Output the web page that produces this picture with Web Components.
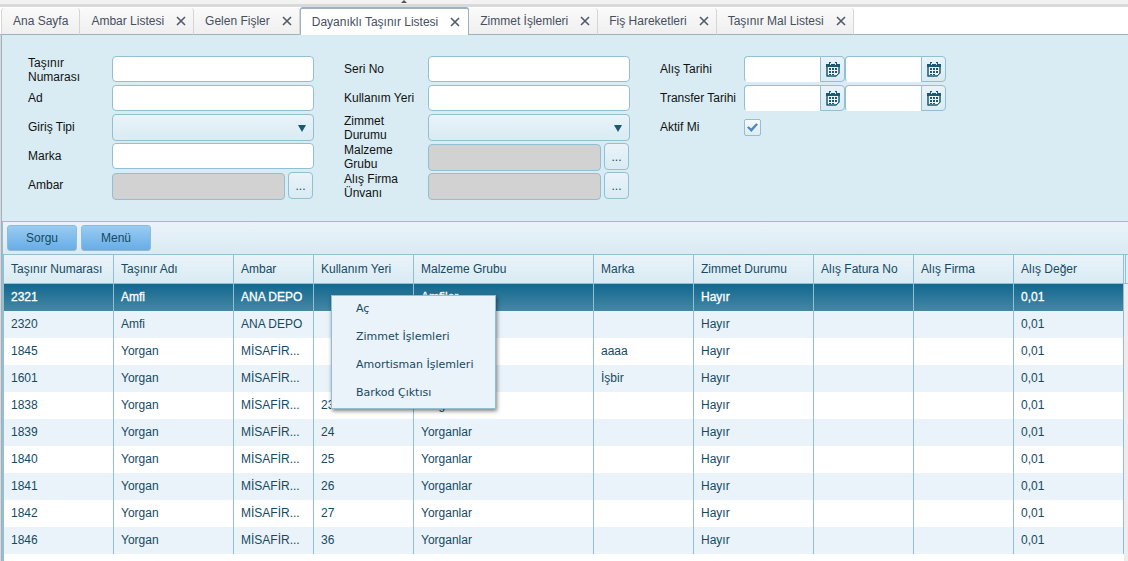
<!DOCTYPE html>
<html lang="tr">
<head>
<meta charset="utf-8">
<title>Dayanıklı Taşınır Listesi</title>
<style>
html, body { margin: 0; height: 100%; }
body { font: 12px/14px "Liberation Sans", Arial, sans-serif; color: #111; background: #fff; overflow: hidden; }
</style>
</head>
<body>
<asset-app></asset-app>

<script>
const define = (name, html, setup) => {
  const tpl = document.createElement('template');
  tpl.innerHTML = html;
  customElements.define(name, class extends HTMLElement {
    connectedCallback() {
      if (this.shadowRoot) return;
      this.attachShadow({ mode: 'open' }).append(tpl.content.cloneNode(true));
      if (setup) setup(this, this.shadowRoot);
    }
  });
};

/* Tab strip */
define('app-tab', `
<style>
:host { display: block; box-sizing: border-box; height: 27px; margin-top: 1px; border-right: 1px solid #d5d5d5; background: linear-gradient(#fafafa, #efefef); border-radius: 3px 3px 0 0; border-bottom: 1px solid #9fb0c0; }
:host([active]) { height: 28px; margin-top: 0; background: #fff; border: 1px solid #9fb0c0; border-top-width: 2px; border-bottom: 0; }
div { display: flex; align-items: center; height: 100%; padding: 0 11px; box-sizing: border-box; }
:host([closable]) div { padding-right: 7px; gap: 12px; }
:host([active]) div { padding-right: 8px; }
button { font: inherit; border: 0; padding: 0; background: none; color: #464f5e; white-space: nowrap; }
svg { display: block; width: 10px; height: 10px; }
#close { display: none; }
:host([closable]) #close { display: block; }
</style>
<div><button role="tab"><slot></slot></button><button id="close" aria-label="Kapat"><svg viewBox="0 0 10 10"><path d="M1 1l8 8M9 1L1 9" stroke="#505a68" stroke-width="1.6" fill="none"/></svg></button></div>`);

define('tab-bar', `
<style>
:host { display: block; }
.top { height: 4px; background: #f2f2f2; display: flex; padding-left: 401px; }
.top svg { display: block; width: 6px; height: 3px; }
.rule { height: 3px; background: #d9d9da; }
.tabs { display: flex; height: 28px; padding-left: 2px; background: linear-gradient(#9fb0c0, #9fb0c0) bottom / 100% 1px no-repeat #fff; }
app-tab:first-child { border-left: 1px solid #d5d5d5; margin-left: -1px; }
</style>
<div class="top"><svg viewBox="0 0 6 3"><path d="M0 3L3 0l3 3z" fill="#555"/></svg></div>
<div class="rule"></div>
<div class="tabs" role="tablist">
<app-tab>Ana Sayfa</app-tab><app-tab closable>Ambar Listesi</app-tab><app-tab closable>Gelen Fişler</app-tab><app-tab closable active>Dayanıklı Taşınır Listesi</app-tab><app-tab closable>Zimmet İşlemleri</app-tab><app-tab closable>Fiş Hareketleri</app-tab><app-tab closable>Taşınır Mal Listesi</app-tab>
</div>`);

/* Form row: label and one control, picked by type */
const CAL = `<svg viewBox="0 0 14 15"><path d="M1 3h12v11H1z" fill="#eaf5f9" stroke="#1b5872" stroke-width="1.5" stroke-linejoin="round"/><path d="M0 2h14v3H0z" fill="#1b5872"/><path d="M3 0h2v3H3zM9 0h2v3H9z" fill="#1b5872"/><path d="M4 1h1v2H4zM9 1h1v2H9z" fill="#cfe6ef"/><path d="M3 6h2v2H3zM6 6h2v2H6zM9 6h2v2H9zM3 9h2v2H3zM6 9h2v2H6zM9 9h2v2H9zM3 12h2v1H3zM6 12h2v1H6z" fill="#1b5872"/><path d="M10 15l4-4v4z" fill="#e1f0f6"/><path d="M10 14l3-3" stroke="#1b5872"/></svg>`;
define('form-field', `
<style>
:host { display: grid; grid-template-columns: 84px auto; align-items: start; justify-content: start; height: 27px; }
label { color: #111; align-self: center; padding-bottom: 2px; }
.box { display: flex; }
input, select, button { box-sizing: border-box; font: inherit; color: #1b4a5e; margin: 0; border: 1px solid #93bfd2; border-radius: 4px; outline: 0; }
input[type=text] { width: 202px; height: 26px; background: #fff; padding: 0 6px; }
.pick { position: relative; width: 202px; }
select { appearance: none; display: block; width: 100%; height: 27px; padding: 0 6px; background: linear-gradient(#eaf3f9, #d9ebf3); }
.pick svg { position: absolute; right: 8px; top: 11px; width: 8px; height: 7px; pointer-events: none; }
.lookup { gap: 3px; align-items: flex-start; }
.lookup input[type=text] { width: 173px; height: 27px; margin-top: 1px; background: #d2d2d2; }
.lookup button { width: 25px; height: 27px; padding: 0; background: linear-gradient(#eaf3f9, #d9ebf3); }
.date input[type=text] { width: 76px; border-right: 0; border-bottom-color: #fff; border-radius: 4px 0 0 4px; }
.date button { width: 25px; height: 26px; padding: 0; display: grid; place-items: center; border-radius: 0 4px 4px 0; background: linear-gradient(#eaf3f9, #d9ebf3); }
.date svg { width: 14px; height: 15px; }
.check { align-self: center; }
input[type=checkbox] { appearance: none; width: 17px; height: 17px; border-radius: 2px; background: linear-gradient(#f6fafc, #dcebf3); display: grid; place-items: center; }
input[type=checkbox]::before { content: ""; width: 11px; height: 9px; background: #4f86bd; clip-path: polygon(0 50%, 15% 36%, 37% 62%, 84% 2%, 100% 16%, 40% 100%); }
</style>
<label for="c"><slot></slot></label><div class="box"></div>`, (el, root) => {
  const box = root.querySelector('.box');
  const name = el.textContent;
  const date = (id, n) => `<input type="text" ${id} aria-label="${n}"><button aria-label="Takvim">${CAL}</button>`;
  const kinds = {
    text: `<input type="text" id="c">`,
    select: `<div class="pick"><select id="c"></select><svg viewBox="0 0 8 7"><path d="M0 0h8L4 7z" fill="#1b5872"/></svg></div>`,
    lookup: `<input type="text" id="c" disabled><button aria-label="Seç">...</button>`,
    date: date('id="c"', name + ' başlangıç') + date('', name + ' bitiş'),
    check: `<input type="checkbox" id="c" checked>`
  };
  const kind = el.getAttribute('type') || 'text';
  box.classList.add(kind);
  box.innerHTML = kinds[kind];
});

define('filter-form', `
<style>
:host { display: flex; box-sizing: border-box; height: 186px; padding: 21px 26px 0; background: #d9ecf4; }
.col { display: grid; grid-auto-rows: 27px; gap: 2px; align-content: start; width: 316px; }
.col:last-child { width: auto; }
</style>
<div class="col">
<form-field>Taşınır Numarası</form-field><form-field>Ad</form-field><form-field type="select">Giriş Tipi</form-field><form-field>Marka</form-field><form-field type="lookup">Ambar</form-field>
</div>
<div class="col">
<form-field>Seri No</form-field><form-field>Kullanım Yeri</form-field><form-field type="select">Zimmet Durumu</form-field><form-field type="lookup">Malzeme Grubu</form-field><form-field type="lookup">Alış Firma Ünvanı</form-field>
</div>
<div class="col">
<form-field type="date">Alış Tarihi</form-field><form-field type="date">Transfer Tarihi</form-field><form-field type="check">Aktif Mi</form-field>
</div>`);

define('tool-bar', `
<style>
:host { display: flex; box-sizing: border-box; height: 34px; padding: 3px 4px; gap: 4px; border: 1px solid #93bfd2; border-width: 1px 0; background: linear-gradient(#eaf3f9, #d9ebf3); }
button { width: 70px; height: 26px; box-sizing: border-box; font: inherit; color: #154a63; border: 1px solid #8dbbd8; border-radius: 3px; background: linear-gradient(#9acbf2, #67ade6); padding: 0; }
</style>
<button>Sorgu</button><button>Menü</button>`);

const HEAD = ['Taşınır Numarası', 'Taşınır Adı', 'Ambar', 'Kullanım Yeri', 'Malzeme Grubu', 'Marka', 'Zimmet Durumu', 'Alış Fatura No', 'Alış Firma', 'Alış Değer'];
const ROWS = [
  ['2321', 'Amfi', 'ANA DEPO', '', 'Amfiler', ''],
  ['2320', 'Amfi', 'ANA DEPO', '', '', ''],
  ['1845', 'Yorgan', 'MİSAFİR...', '', '', 'aaaa'],
  ['1601', 'Yorgan', 'MİSAFİR...', '', '', 'İşbir'],
  ['1838', 'Yorgan', 'MİSAFİR...', '23', 'Yorganlar', ''],
  ['1839', 'Yorgan', 'MİSAFİR...', '24', 'Yorganlar', ''],
  ['1840', 'Yorgan', 'MİSAFİR...', '25', 'Yorganlar', ''],
  ['1841', 'Yorgan', 'MİSAFİR...', '26', 'Yorganlar', ''],
  ['1842', 'Yorgan', 'MİSAFİR...', '27', 'Yorganlar', ''],
  ['1846', 'Yorgan', 'MİSAFİR...', '36', 'Yorganlar', '']
];
define('data-grid', `
<style>
:host { display: flex; flex: 1; color: #154a63; border-left: 1px solid #93bfd2; }
table { table-layout: fixed; width: 100%; border-collapse: separate; border-spacing: 0; }
th, td { box-sizing: border-box; padding: 0 7px; text-align: left; font-weight: normal; border-right: 1px solid #93bfd2; white-space: nowrap; overflow: hidden; }
th { height: 29px; border-bottom: 1px solid #93bfd2; background: linear-gradient(#eaf3f9, #d9ebf3); }
td { height: 27px; padding-bottom: 2px; }
tr:nth-child(even) td { background: #eaf3f9; }
tr.sel td { background: linear-gradient(#12688f, #4687a5); color: #fff; -webkit-text-stroke: 0.3px #fff; }
.side { width: 4px; flex: none; background: #ededed; }
.side i { display: block; height: 29px; box-sizing: border-box; padding-left: 1px; border-bottom: 1px solid #93bfd2; background: linear-gradient(90deg, #e2eff6 1px, #93bfd2 1px 2px, #e2eff6 2px); }
.main { flex: 1; min-width: 0; }
</style>
<div class="main"><table><colgroup></colgroup><thead><tr></tr></thead><tbody></tbody></table></div><div class="side"><i></i></div>`, (el, root) => {
  root.querySelector('colgroup').innerHTML = [110, 120, 80, 100, 180, 100, 120, 100, 100, 0].map(w => w ? `<col style="width:${w}px">` : '<col>').join('');
  root.querySelector('thead tr').innerHTML = HEAD.map(h => `<th>${h}</th>`).join('');
  root.querySelector('tbody').innerHTML = ROWS.map((r, i) =>
    `<tr${i ? '' : ' class="sel"'}>${[...r, 'Hayır', '', '', '0,01'].map(c => `<td>${c}</td>`).join('')}</tr>`).join('');
});

define('context-menu', `
<style>
:host { display: block; position: absolute; box-sizing: border-box; width: 165px; height: 114px; border: 1px solid #93bfd2; background: #eaf3f9; box-shadow: 1px 2px 4px rgba(0,0,0,.5); font: 11px/28px "DejaVu Sans", Verdana, sans-serif; }
button { display: block; width: 100%; height: 28px; padding: 0 0 0 24px; border: 0; background: none; font: inherit; color: #154a63; text-align: left; white-space: nowrap; }
div { margin-top: -1px; }
</style>
<div role="menu"><button role="menuitem">Aç</button><button role="menuitem">Zimmet İşlemleri</button><button role="menuitem">Amortisman İşlemleri</button><button role="menuitem">Barkod Çıktısı</button></div>`);

define('asset-app', `
<style>
:host { display: flex; flex-direction: column; min-height: 100vh; background: linear-gradient(90deg, #d9d9da 1px, #fff 1px); }
main { flex: 1; display: flex; flex-direction: column; margin-left: 1px; border-left: 1px solid #9fb0c0; }
.list { flex: 1; display: flex; flex-direction: column; position: relative; border-left: 1px solid #93bfd2; }
context-menu { left: 328px; top: 74px; }
</style>
<tab-bar></tab-bar>
<main><filter-form></filter-form><section class="list"><tool-bar></tool-bar><data-grid></data-grid><context-menu></context-menu></section></main>`);
</script>
</body>
</html>
